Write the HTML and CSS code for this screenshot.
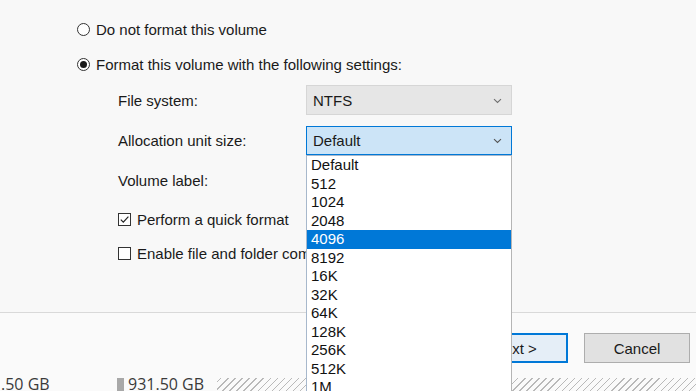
FILE: index.html
```html
<!DOCTYPE html>
<html>
<head>
<meta charset="utf-8">
<link rel="stylesheet" href="styles.css">
</head>
<body>
<div class="page">
  <div class="dialog">
    <div class="dialog-main">
      <div class="radio-row">
        <span class="radio"></span>
        <span>Do not format this volume</span>
      </div>
      <div class="radio-row second">
        <span class="radio checked"><span class="dot"></span></span>
        <span>Format this volume with the following settings:</span>
      </div>
      <div class="settings">
        <div class="label">File system:</div>
        <div class="combo disabled"><span>NTFS</span>
          <svg class="chev" width="9" height="6" viewBox="0 0 9 6"><path d="M1 1.2 L4.5 4.5 L8 1.2" fill="none" stroke="#707070" stroke-width="1.1"/></svg>
        </div>
        <div class="label">Allocation unit size:</div>
        <div class="combo active"><span>Default</span>
          <svg class="chev" width="9" height="6" viewBox="0 0 9 6"><path d="M1 1.2 L4.5 4.5 L8 1.2" fill="none" stroke="#555" stroke-width="1.1"/></svg>
        </div>
        <div class="label">Volume label:</div>
        <div class="textbox"></div>
      </div>
      <div class="check-row first">
        <span class="check"><svg width="11" height="11" viewBox="0 0 11 11"><path d="M1.8 5.6 L4.3 8.1 L9.4 2.6" fill="none" stroke="#222" stroke-width="1.2"/></svg></span>
        <span>Perform a quick format</span>
      </div>
      <div class="check-row">
        <span class="check"></span>
        <span class="clip">Enable file and folder compression</span>
      </div>
    </div>
    <div class="dialog-footer">
      <button class="btn default">Next &gt;</button>
      <button class="btn">Cancel</button>
    </div>
  </div>
  <div class="strip">
    <span class="cap first">.50 GB</span>
    <span class="bar"></span>
    <span class="cap">931.50 GB</span>
    <span class="hatch"></span>
  </div>

  <ul class="droplist">
    <li>Default</li>
    <li>512</li>
    <li>1024</li>
    <li>2048</li>
    <li class="sel">4096</li>
    <li>8192</li>
    <li>16K</li>
    <li>32K</li>
    <li>64K</li>
    <li>128K</li>
    <li>256K</li>
    <li>512K</li>
    <li>1M</li>
    <li>2M</li>
  </ul>
</div>
</body>
</html>
```

FILE: styles.css
```css
* { box-sizing: border-box; }
html, body {
  margin: 0;
  padding: 0;
}
body {
  width: 696px;
  height: 391px;
  overflow: hidden;
  background: #fbfbfb;
  font-family: "Liberation Sans", Arial, sans-serif;
  font-size: 15px;
  color: #1a1a1a;
}
.page {
  position: relative;
  width: 696px;
  height: 391px;
  overflow: hidden;
}
.dialog {
  display: flex;
  flex-direction: column;
  height: 378px;
}
.dialog-main {
  height: 312px;
  padding: 19px 0 0 77px;
  background: #f8f8f8;
  display: flex;
  flex-direction: column;
}
.radio-row {
  display: flex;
  align-items: center;
  gap: 6px;
  height: 20px;
}
.radio-row.second { margin-top: 15px; }
.radio {
  width: 13px;
  height: 13px;
  border: 1px solid #333;
  border-radius: 50%;
  background: #fff;
  display: flex;
  align-items: center;
  justify-content: center;
  flex: none;
}
.dot {
  width: 7px;
  height: 7px;
  border-radius: 50%;
  background: #1a1a1a;
}
.settings {
  margin-top: 11px;
  margin-left: 41px;
  display: grid;
  grid-template-columns: 188px 206px;
  grid-auto-rows: 30px;
  row-gap: 10px;
}
.label {
  display: flex;
  align-items: center;
}
.combo {
  display: flex;
  align-items: center;
  justify-content: space-between;
  padding: 0 9px 0 6px;
  border: 1px solid #cfcfcf;
}
.combo.disabled {
  background: #e6e6e6;
  border-color: #d6d6d6;
}
.combo.active {
  background: #cce4f7;
  border-color: #0078d7;
  margin-top: 1px;
}
.chev { display: block; margin-top: 1px; }
.textbox {
  background: #fff;
  border: 1px solid #7a7a7a;
}
.check-row {
  display: flex;
  align-items: center;
  gap: 6px;
  height: 20px;
  margin-left: 41px;
  margin-top: 14px;
}
.clip {
  display: block;
  width: 169px;
  overflow: hidden;
  white-space: nowrap;
}
.check {
  width: 13px;
  height: 13px;
  border: 1px solid #333;
  background: #fff;
  flex: none;
  display: flex;
  align-items: center;
  justify-content: center;
}
.check svg { display: block; }
.dialog-footer {
  height: 66px;
  border-top: 1px solid #d9d9d9;
  background: #fafafa;
  display: flex;
  justify-content: flex-end;
  align-items: flex-start;
  gap: 16px;
  padding: 20px 6px 0 0;
}
.btn {
  width: 106px;
  height: 30px;
  font-family: "Liberation Sans", Arial, sans-serif;
  font-size: 15px;
  color: #1a1a1a;
  background: #e1e1e1;
  border: 1px solid #adadad;
  padding: 0;
}
.btn.default {
  border: 2px solid #0078d7;
  background: #e5eef7;
}
.strip {
  height: 13px;
  display: flex;
  overflow: hidden;
  background: #fafafa;
}
.cap {
  font-family: "Open Sans", "Noto Sans", sans-serif;
  font-size: 16px;
  line-height: 13px;
  color: #3a3a3a;
  white-space: nowrap;
  flex: none;
}
.cap.first {
  padding-left: 1px;
  width: 117px;
}
.bar {
  width: 7px;
  background: #a8a8a8;
  margin-right: 4px;
  flex: none;
}
.hatch {
  flex: 1;
  margin-left: 13px;
  background: repeating-linear-gradient(135deg, #fafafa 0 2.5px, #b9b9b9 2.5px 3.5px, #fafafa 3.5px 5px);
}
.droplist {
  position: absolute;
  left: 306px;
  top: 155px;
  width: 206px;
  height: 250px;
  margin: 0;
  padding: 0;
  list-style: none;
  background: #fff;
  border: 1px solid #a7b8cc;
  border-right-color: #b5b5b5;
  overflow: hidden;
}
.droplist li {
  height: 18.5px;
  line-height: 18.5px;
  padding-left: 4px;
  color: #111;
  white-space: nowrap;
}
.droplist li.sel {
  background: #0078d7;
  color: #fff;
}
```
